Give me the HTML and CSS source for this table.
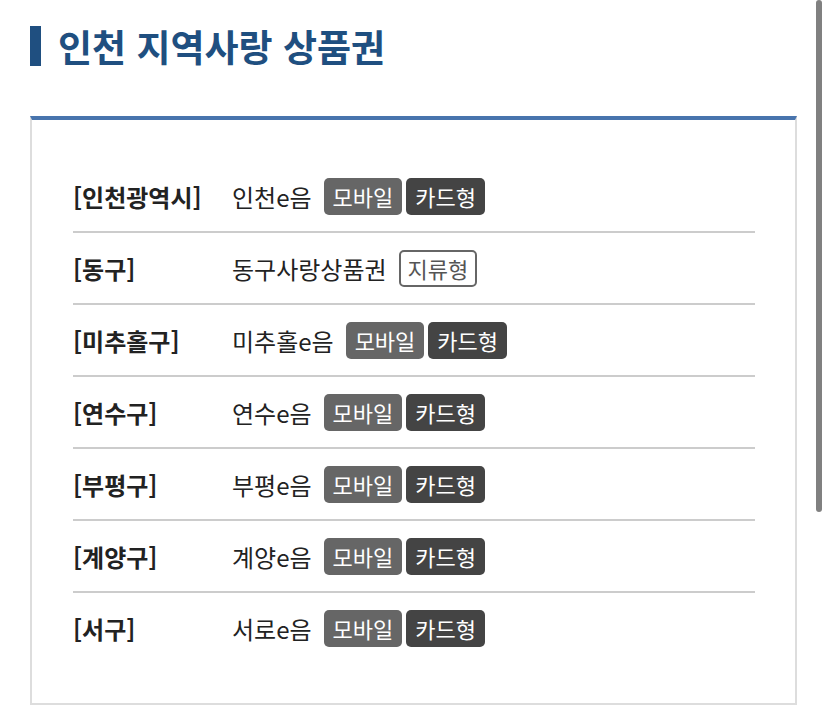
FILE: index.html
```html
<!DOCTYPE html>
<html lang="ko">
<head>
<meta charset="utf-8">
<title>인천 지역사랑 상품권</title>
<link rel="stylesheet" href="styles.css">
</head>
<body>
<div class="page">
  <h1 class="title"><span class="title-bar"></span>인천 지역사랑 상품권</h1>
  <div class="box">
    <div class="row"><div class="label">[인천광역시]</div><div class="value"><span class="name">인천e음</span><span class="badge mobile">모바일</span><span class="badge card">카드형</span></div></div>
    <div class="row"><div class="label">[동구]</div><div class="value"><span class="name">동구사랑상품권</span><span class="badge paper">지류형</span></div></div>
    <div class="row"><div class="label">[미추홀구]</div><div class="value"><span class="name">미추홀e음</span><span class="badge mobile">모바일</span><span class="badge card">카드형</span></div></div>
    <div class="row"><div class="label">[연수구]</div><div class="value"><span class="name">연수e음</span><span class="badge mobile">모바일</span><span class="badge card">카드형</span></div></div>
    <div class="row"><div class="label">[부평구]</div><div class="value"><span class="name">부평e음</span><span class="badge mobile">모바일</span><span class="badge card">카드형</span></div></div>
    <div class="row"><div class="label">[계양구]</div><div class="value"><span class="name">계양e음</span><span class="badge mobile">모바일</span><span class="badge card">카드형</span></div></div>
    <div class="row"><div class="label">[서구]</div><div class="value"><span class="name">서로e음</span><span class="badge mobile">모바일</span><span class="badge card">카드형</span></div></div>
  </div>
</div>
<div class="scrollbar"></div>
</body>
</html>
```

FILE: styles.css
```css
html, body {
  margin: 0;
  padding: 0;
  background: #fff;
}
body {
  font-family: "Noto Sans CJK KR", "Noto Sans", sans-serif;
  color: #222;
}
.page {
  padding: 26px 31px 0 30px;
}
.title {
  display: flex;
  align-items: center;
  margin: 0;
  height: 40px;
  font-size: 37px;
  font-weight: 700;
  color: #1f4f80;
}
.title-bar {
  display: block;
  width: 11px;
  height: 40px;
  background: #1f4f80;
  margin-right: 17px;
}
.box {
  margin-top: 50px;
  border: 2px solid #dddddd;
  border-top: 4px solid #4874ad;
  padding: 41px 40px 40px 41px;
}
.row {
  display: flex;
  align-items: center;
  height: 70px;
  border-bottom: 2px solid #cccccc;
}
.row:last-child {
  border-bottom: none;
}
.label {
  width: 159px;
  font-size: 24px;
  font-weight: 700;
  color: #222;
}
.value {
  display: flex;
  align-items: center;
  gap: 4px;
  font-size: 24px;
  color: #222;
}
.name {
  margin-right: 8px;
}
.badge {
  display: block;
  height: 37px;
  line-height: 37px;
  padding: 0 9px;
  border-radius: 5px;
  font-size: 22px;
  color: #fff;
  box-sizing: border-box;
}
.mobile {
  background: #666666;
}
.card {
  background: #444444;
}
.paper {
  background: #fff;
  color: #555;
  border: 2px solid #666;
  line-height: 33px;
  padding: 0 7px;
}
.scrollbar {
  position: fixed;
  top: 0;
  right: 6px;
  width: 6px;
  height: 512px;
  border-radius: 3px;
  background: #808080;
}
```
